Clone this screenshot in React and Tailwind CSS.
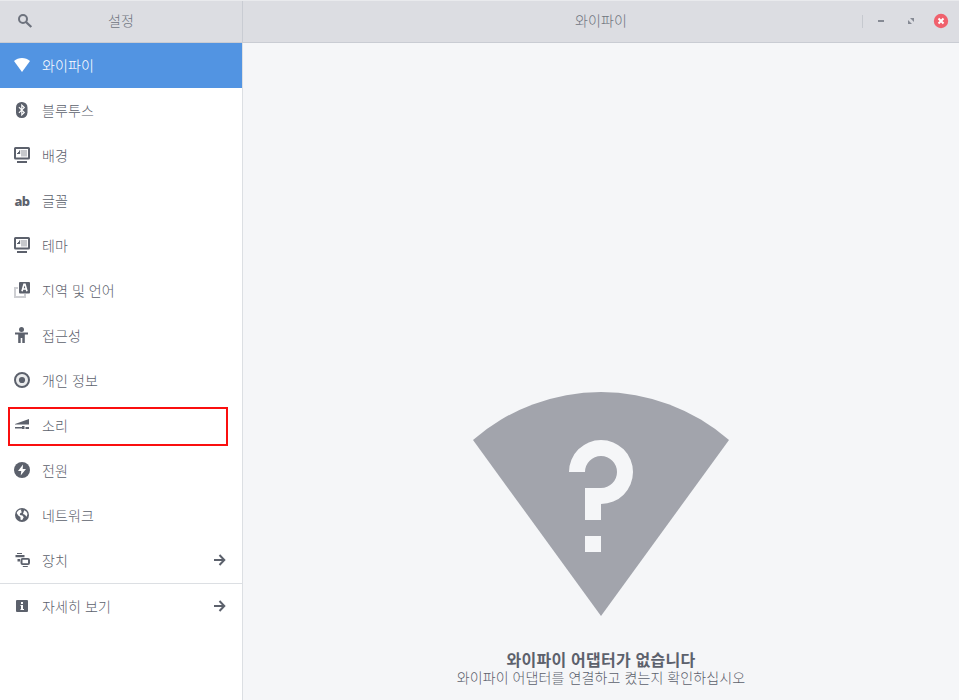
import React from "react";

const Icon = ({ children, className = "" }) => (
  <svg viewBox="0 0 16 16" className={`h-4 w-4 shrink-0 ${className}`} fill="currentColor">
    {children}
  </svg>
);

const WifiIcon = () => (
  <Icon>
    <path d="M8 15 0 4C2.2 2 5 1 8 1s5.800 1 8 3Z" />
  </Icon>
);

const BluetoothIcon = () => (
  <Icon>
    <rect x="2" y="0" width="11.500" height="16" rx="5.500" />
    <path d="M4.900 5.200 10.300 10.500 7.800 13V3l2.500 2.500-5.400 5.300" fill="none" stroke="#fff" strokeWidth="1.100" />
  </Icon>
);

const DisplayIcon = () => (
  <Icon>
    <path fillRule="evenodd" d="M1.500 0h13A1.500 1.500 0 0 1 16 1.500v9.500a1.500 1.500 0 0 1-1.500 1.500h-13A1.500 1.500 0 0 1 0 11V1.500A1.500 1.500 0 0 1 1.500 0ZM2 2v8.500h12V2Z" />
    <path d="M6.500 3H13v6.500H7V7H6.500Z" opacity=".35" />
    <path d="M6 3.500V7H3V6h1V5h1V3.500ZM3 14h10v2H3Z" />
  </Icon>
);

const FontIcon = () => (
  <span className="flex h-4 w-4 shrink-0 items-center justify-center pt-0.5 font-['Noto_Sans',sans-serif] text-[13px] leading-4 font-extrabold tracking-[-0.500px]">
    ab
  </span>
);

const LanguageIcon = () => (
  <Icon>
    <path d="M0 5h4v2H2v7h8v-2h2v4H0Z" opacity=".3" />
    <rect x="5" y="0" width="11" height="11.500" rx="1" />
    <path d="m8 9.300 2-7h1l2 7M8.900 7h3.400" fill="none" stroke="#fff" strokeWidth="1.600" />
  </Icon>
);

const AccessIcon = () => (
  <Icon>
    <circle cx="7.500" cy="2.500" r="2.500" />
    <path d="M1 5.500h13v2h-3.200V16H8.300v-5H6.700v5H4.200V7.500H1Z" />
  </Icon>
);

const PrivacyIcon = () => (
  <Icon>
    <circle cx="8" cy="8" r="6" opacity=".12" />
    <circle cx="8" cy="8" r="7" fill="none" stroke="currentColor" strokeWidth="2" />
    <circle cx="8" cy="8" r="3.100" />
  </Icon>
);

const SoundIcon = () => (
  <Icon>
    <path d="M1 7.500V7L15 2v5.500ZM1 10h7V9h2.500v3H8v-.5H1Zm10.500 0H15v2h-3.500Z" />
  </Icon>
);

const PowerIcon = () => (
  <Icon>
    <circle cx="8" cy="8" r="8" />
    <path d="M9 2.500 4 9h3.300L6.700 13.500 12 7H8.700Z" fill="#fff" />
  </Icon>
);

const NetworkIcon = () => (
  <Icon>
    <circle cx="8" cy="8" r="7" />
    <path d="M2.800 5.200 5 3l2.300-.4-.3 1.600 1.200.9-2 1.100-.4 1.700 2.700.7 1.200 1.600L8.200 13l-1.600-.3-.2-2.600-2.100-1.500-1.400-2ZM10.200 3.300l2.300 1.500 1 2.300-.9 2.600-1.700-1.900-1.900-.8.600-2Z" fill="#fff" />
  </Icon>
);

const DevicesIcon = () => (
  <Icon>
    <path d="M3 1h5v1H3ZM1.500 3h9v2.300h-9ZM3.500 7H6v2.500H3.500Z" />
    <path fillRule="evenodd" d="M8.500 6H14a2 2 0 0 1 2 2v3a2 2 0 0 1-2 2H8.500a2 2 0 0 1-2-2V8a2 2 0 0 1 2-2ZM8.500 7.700v3.600H14V7.700ZM8.800 14h5v1h-5Z" />
  </Icon>
);

const AboutIcon = () => (
  <Icon>
    <rect x="2" y="2" width="12" height="12" rx="1" />
    <path d="M7 4h2v2H7ZM6.500 7H9v4h1v1H6.500v-1H7V8h-.5Z" fill="#fff" />
  </Icon>
);

const ArrowIcon = () => (
  <Icon className="ml-auto">
    <path d="M2 8h10M7.500 3l4.800 5-4.800 5" fill="none" stroke="currentColor" strokeWidth="2" />
  </Icon>
);

const items = [
  { label: "와이파이", icon: WifiIcon, active: true },
  { label: "블루투스", icon: BluetoothIcon },
  { label: "배경", icon: DisplayIcon },
  { label: "글꼴", icon: FontIcon },
  { label: "테마", icon: DisplayIcon },
  { label: "지역 및 언어", icon: LanguageIcon },
  { label: "접근성", icon: AccessIcon },
  { label: "개인 정보", icon: PrivacyIcon },
  { label: "소리", icon: SoundIcon, marked: true },
  { label: "전원", icon: PowerIcon },
  { label: "네트워크", icon: NetworkIcon },
  { label: "장치", icon: DevicesIcon, arrow: true },
  { label: "자세히 보기", icon: AboutIcon, arrow: true, divided: true },
];

function Row({ label, icon: RowIcon, active, marked, arrow, divided }) {
  return (
    <li
      className={`relative flex items-center gap-3 px-3.5 pb-px ${
        active ? "bg-[#5294e2] text-white" : "text-[#5c616c]"
      } ${divided ? "h-[46px] border-t border-[#dcdfe3]" : "h-[45px]"}`}
    >
      <RowIcon />
      <span className="pb-px">{label}</span>
      {arrow && <ArrowIcon />}
      {marked && <span className="absolute top-1 left-2 h-[39px] w-[220px] border-2 border-[#fa0f0f]" />}
    </li>
  );
}

export default function App() {
  return (
    <div className="flex h-[700px] w-[959px] flex-col overflow-hidden bg-[#f5f6f8] font-['Noto_Sans_CJK_KR',sans-serif] text-[14px] leading-[18px] font-light tracking-[0.120px] text-[#5c616c] [word-spacing:0.700px]">
      <header className="flex h-[43px] shrink-0 border-t border-b border-t-[#e9eaed] border-b-[#c9ccd3] bg-[#dcdde2] text-[#70757f]">
        <div className="flex w-[243px] items-center border-r border-[#c9ccd3] pb-px pl-[17px]">
          <Icon className="text-[#6d727d]">
            <circle cx="6" cy="6" r="4" fill="none" stroke="currentColor" strokeWidth="2" />
            <path d="m9 9 5.300 5" stroke="currentColor" strokeWidth="2.300" />
          </Icon>
          <h1 className="ml-[75px] pb-[3px]">설정</h1>
        </div>
        <div className="flex flex-1 items-center pb-px">
          <h2 className="ml-[332px] pb-[3px]">와이파이</h2>
          <div className="mr-[10px] ml-auto flex items-center">
            <span className="mr-[10px] h-[13px] w-px bg-[#c6c9cf]" />
            <div className="flex gap-3.5 text-[#868a94]">
              <Icon>
                <path d="M5 7h6v2H5Z" />
              </Icon>
              <Icon>
                <path d="M7 5h4v4ZM5 7v4h4Z" />
              </Icon>
              <Icon className="text-[#f0616d]">
                <circle cx="8" cy="8" r="7.200" />
                <path d="m5.500 5.500 5 5m0-5-5 5" stroke="#fff" strokeWidth="2" />
              </Icon>
            </div>
          </div>
        </div>
      </header>
      <div className="flex flex-1">
        <aside className="w-[243px] border-r border-[#dcdfe3] bg-white">
          <ul>
            {items.map((item) => (
              <Row key={item.label} {...item} />
            ))}
          </ul>
        </aside>
        <main className="flex flex-1 flex-col items-center pt-[349px]">
          <svg viewBox="0 0 256 224" className="h-[224px] w-[256px]">
            <path d="M128 224 0 48a194.700 194.700 0 0 1 256 0Z" fill="#a2a4ac" />
            <path d="M96 80a32 32 0 1 1 32 32v16h-16V96h16a16 16 0 1 0-16-16ZM112 144h16v16h-16Z" fill="#f5f6f8" />
          </svg>
          <p className="mt-[34px] text-[16px] leading-[18px] font-bold tracking-[0.250px]">와이파이 어댑터가 없습니다</p>
          <p>와이파이 어댑터를 연결하고 켰는지 확인하십시오</p>
        </main>
      </div>
    </div>
  );
}
